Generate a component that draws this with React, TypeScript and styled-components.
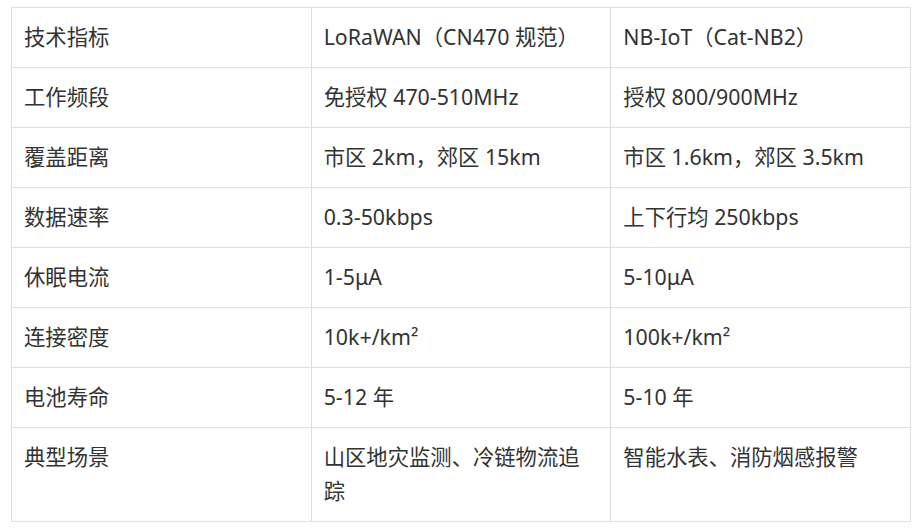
import styled, { createGlobalStyle } from 'styled-components'

const GlobalStyle = createGlobalStyle`
  html, body {
    margin: 0;
    padding: 0;
    background: #fff;
  }
`

const Page = styled.div`
  padding: 7px 0 0 11px;
  font-family: 'Noto Sans', 'Noto Sans CJK SC', sans-serif;
  color: #333;
`

const Table = styled.table`
  width: 900px;
  table-layout: fixed;
  border-collapse: collapse;
`

const Cell = styled.td`
  border: 1px solid #dedede;
  padding: 12px 12px 13px;
  font-size: 21.33px;
  line-height: 34px;
  vertical-align: top;
  word-break: break-all;
`

const rows: [string, string, string][] = [
  ['技术指标', 'LoRaWAN（CN470 规范）', 'NB-IoT（Cat-NB2）'],
  ['工作频段', '免授权 470-510MHz', '授权 800/900MHz'],
  ['覆盖距离', '市区 2km，郊区 15km', '市区 1.6km，郊区 3.5km'],
  ['数据速率', '0.3-50kbps', '上下行均 250kbps'],
  ['休眠电流', '1-5μA', '5-10μA'],
  ['连接密度', '10k+/km²', '100k+/km²'],
  ['电池寿命', '5-12 年', '5-10 年'],
  ['典型场景', '山区地灾监测、冷链物流追踪', '智能水表、消防烟感报警'],
]

const App: React.FC = () => (
  <Page>
    <GlobalStyle />
    <Table>
      <tbody>
        {rows.map((row, i) => (
          <tr key={i}>
            {row.map((text, j) => (
              <Cell key={j}>{text}</Cell>
            ))}
          </tr>
        ))}
      </tbody>
    </Table>
  </Page>
)

export default App
